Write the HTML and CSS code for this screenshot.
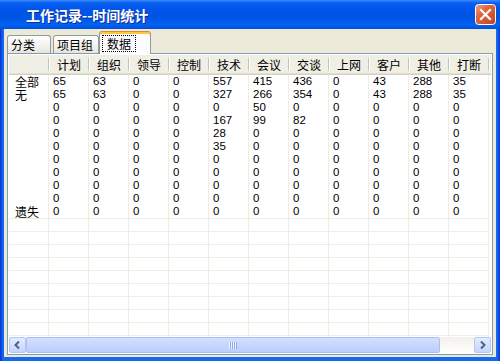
FILE: index.html
```html
<!DOCTYPE html>
<html lang="zh-CN">
<head>
    <meta charset="UTF-8">
    <title>工作记录--时间统计</title>
    <link rel="stylesheet" href="styles.css">
</head>
<body>
    <div class="window">
        <div class="titlebar">
            <span class="title">工作记录--时间统计</span>
            <span class="close">
                <svg width="21" height="21" viewBox="0 0 21 21">
                    <defs>
                        <linearGradient id="closeBg" x1="0" y1="0" x2="1" y2="1">
                            <stop offset="0" stop-color="#F0A48A"/>
                            <stop offset="0.35" stop-color="#E2683F"/>
                            <stop offset="1" stop-color="#C2401A"/>
                        </linearGradient>
                    </defs>
                    <rect x="0.5" y="0.5" width="20" height="20" rx="3" fill="url(#closeBg)" stroke="#FFFFFF"/>
                    <path d="M6 6 L15 15 M15 6 L6 15" stroke="#FFFFFF" stroke-width="2.2" stroke-linecap="square"/>
                </svg>
            </span>
        </div>
        <div class="client">
            <div class="tabs">
                <div class="tab tab-a">分类</div>
                <div class="tab tab-b">项目组</div>
                <div class="tab active"><span class="focus">数据</span></div>
            </div>
            <div class="panel">
                <div class="list-head">
                    <div class="hcell"></div>
                    <div class="hcell">计划</div>
                    <div class="hcell">组织</div>
                    <div class="hcell">领导</div>
                    <div class="hcell">控制</div>
                    <div class="hcell">技术</div>
                    <div class="hcell">会议</div>
                    <div class="hcell">交谈</div>
                    <div class="hcell">上网</div>
                    <div class="hcell">客户</div>
                    <div class="hcell">其他</div>
                    <div class="hcell">打断</div>
                </div>
                <div class="rows">
                    <div class="row"><div class="cell first">全部</div><div class="cell">65</div><div class="cell">63</div><div class="cell">0</div><div class="cell">0</div><div class="cell">557</div><div class="cell">415</div><div class="cell">436</div><div class="cell">0</div><div class="cell">43</div><div class="cell">288</div><div class="cell">35</div></div>
                    <div class="row"><div class="cell first">无</div><div class="cell">65</div><div class="cell">63</div><div class="cell">0</div><div class="cell">0</div><div class="cell">327</div><div class="cell">266</div><div class="cell">354</div><div class="cell">0</div><div class="cell">43</div><div class="cell">288</div><div class="cell">35</div></div>
                    <div class="row"><div class="cell first"></div><div class="cell">0</div><div class="cell">0</div><div class="cell">0</div><div class="cell">0</div><div class="cell">0</div><div class="cell">50</div><div class="cell">0</div><div class="cell">0</div><div class="cell">0</div><div class="cell">0</div><div class="cell">0</div></div>
                    <div class="row"><div class="cell first"></div><div class="cell">0</div><div class="cell">0</div><div class="cell">0</div><div class="cell">0</div><div class="cell">167</div><div class="cell">99</div><div class="cell">82</div><div class="cell">0</div><div class="cell">0</div><div class="cell">0</div><div class="cell">0</div></div>
                    <div class="row"><div class="cell first"></div><div class="cell">0</div><div class="cell">0</div><div class="cell">0</div><div class="cell">0</div><div class="cell">28</div><div class="cell">0</div><div class="cell">0</div><div class="cell">0</div><div class="cell">0</div><div class="cell">0</div><div class="cell">0</div></div>
                    <div class="row"><div class="cell first"></div><div class="cell">0</div><div class="cell">0</div><div class="cell">0</div><div class="cell">0</div><div class="cell">35</div><div class="cell">0</div><div class="cell">0</div><div class="cell">0</div><div class="cell">0</div><div class="cell">0</div><div class="cell">0</div></div>
                    <div class="row"><div class="cell first"></div><div class="cell">0</div><div class="cell">0</div><div class="cell">0</div><div class="cell">0</div><div class="cell">0</div><div class="cell">0</div><div class="cell">0</div><div class="cell">0</div><div class="cell">0</div><div class="cell">0</div><div class="cell">0</div></div>
                    <div class="row"><div class="cell first"></div><div class="cell">0</div><div class="cell">0</div><div class="cell">0</div><div class="cell">0</div><div class="cell">0</div><div class="cell">0</div><div class="cell">0</div><div class="cell">0</div><div class="cell">0</div><div class="cell">0</div><div class="cell">0</div></div>
                    <div class="row"><div class="cell first"></div><div class="cell">0</div><div class="cell">0</div><div class="cell">0</div><div class="cell">0</div><div class="cell">0</div><div class="cell">0</div><div class="cell">0</div><div class="cell">0</div><div class="cell">0</div><div class="cell">0</div><div class="cell">0</div></div>
                    <div class="row"><div class="cell first"></div><div class="cell">0</div><div class="cell">0</div><div class="cell">0</div><div class="cell">0</div><div class="cell">0</div><div class="cell">0</div><div class="cell">0</div><div class="cell">0</div><div class="cell">0</div><div class="cell">0</div><div class="cell">0</div></div>
                    <div class="row"><div class="cell first">遗失</div><div class="cell">0</div><div class="cell">0</div><div class="cell">0</div><div class="cell">0</div><div class="cell">0</div><div class="cell">0</div><div class="cell">0</div><div class="cell">0</div><div class="cell">0</div><div class="cell">0</div><div class="cell">0</div></div>
                </div>
                <div class="filler"></div>
                <div class="hscroll">
                    <div class="sbtn">
                        <svg width="7" height="8" viewBox="0 0 7 8"><path d="M5 0.5 L1.5 4 L5 7.5" fill="none" stroke="#4D6185" stroke-width="2"/></svg>
                    </div>
                    <div class="thumb"><span class="grip"></span></div>
                    <div class="track"></div>
                    <div class="sbtn">
                        <svg width="7" height="8" viewBox="0 0 7 8"><path d="M2 0.5 L5.5 4 L2 7.5" fill="none" stroke="#4D6185" stroke-width="2"/></svg>
                    </div>
                </div>
            </div>
        </div>
    </div>
</body>
</html>
```

FILE: styles.css
```css
html, body {
    margin: 0;
}
body {
    font-family: "Noto Sans CJK SC", sans-serif;
    font-size: 12px;
    color: #000;
    width: 500px;
    height: 361px;
    overflow: hidden;
}
.window {
    width: 500px;
    height: 361px;
    display: flex;
    flex-direction: column;
    background: linear-gradient(to right, #0831D9 0, #166AEE 3px, #166AEE 497px, #0831D9 500px);
}
.titlebar {
    height: 29px;
    flex: none;
    display: flex;
    align-items: center;
    justify-content: space-between;
    padding: 0 4px 0 26px;
    background: linear-gradient(to bottom, #3A8CFF 0%, #0A5FF2 10%, #0055EA 30%, #0054E3 60%, #0062F5 85%, #004FDB 100%);
}
.title {
    color: #fff;
    font-weight: bold;
    font-size: 14px;
    text-shadow: 1px 1px 0 #0F2C96;
    line-height: 29px;
    padding-top: 1px;
}
.close svg {
    display: block;
}
.client {
    flex: 1;
    margin: 0 4px 4px;
    padding: 0 3px 2px;
    background: #ECE9D8;
    display: flex;
    flex-direction: column;
}
.tabs {
    height: 24px;
    flex: none;
    display: flex;
    align-items: flex-end;
}
.tab {
    box-sizing: border-box;
    height: 18px;
    line-height: 17px;
    border: 1px solid #919B9C;
    border-bottom: none;
    border-radius: 3px 3px 0 0;
    background: linear-gradient(to bottom, #FFFFFF, #F0EFEA 70%, #E6E4DA);
    padding-left: 3px;
}
.tab-a {
    width: 44px;
    margin-right: 2px;
}
.tab-b {
    width: 46px;
}
.tab.active {
    width: 52px;
    height: 23px;
    margin-bottom: -1px;
    padding-left: 3px;
    padding-top: 3px;
    border-top: 1px solid #E68B2C;
    box-shadow: inset 0 2px 0 #FFC73C;
    background: #FCFCFE;
    position: relative;
    z-index: 1;
}
.focus {
    display: inline-block;
    outline: 1px dotted #000;
    padding: 0 4px;
    line-height: 15px;
}
.panel {
    flex: 1;
    border: 1px solid #7F9DB9;
    background: #fff;
    padding: 1px;
    display: flex;
    flex-direction: column;
}
.list-head {
    height: 20px;
    flex: none;
    display: flex;
    background: #F0EFE6;
    box-shadow: inset 0 -1px 0 #D6D2C2, inset 0 -2px 0 #E2DECD;
}
.hcell {
    width: 40px;
    flex: none;
    box-sizing: border-box;
    padding-left: 8px;
    line-height: 20px;
    position: relative;
}
.hcell::after {
    content: "";
    position: absolute;
    right: 0;
    top: 3px;
    bottom: 4px;
    width: 1px;
    background: #C7C5B2;
    box-shadow: 1px 0 0 #fff;
}
.row {
    display: flex;
    height: 13px;
    line-height: 13px;
}
.cell {
    width: 40px;
    flex: none;
    box-sizing: border-box;
    border-right: 1px solid #EFEDE3;
    padding-left: 4px;
    font-family: "Liberation Sans", sans-serif;
    font-size: 11.5px;
}
.cell.first {
    padding-left: 6px;
    font-family: "Noto Sans CJK SC", sans-serif;
    font-size: 12px;
}
.filler {
    flex: 1;
    background:
        repeating-linear-gradient(to right, transparent 0 39px, #EFEDE3 39px 40px),
        repeating-linear-gradient(to bottom, #EFEDE3 0 1px, transparent 1px 13px);
    background-size: 480px 100%, 480px 100%;
    background-repeat: no-repeat;
}
.hscroll {
    height: 16px;
    flex: none;
    display: flex;
}
.sbtn {
    width: 17px;
    flex: none;
    box-sizing: border-box;
    border: 1px solid #B4C8F6;
    border-radius: 2px;
    background: linear-gradient(to bottom, #E3EBFE, #C4D4FC);
    display: flex;
    align-items: center;
    justify-content: center;
}
.thumb {
    width: 414px;
    flex: none;
    box-sizing: border-box;
    border: 1px solid #A9BEF3;
    border-radius: 2px;
    background: linear-gradient(to bottom, #D3DFFD, #BBCEFA);
    display: flex;
    align-items: center;
    justify-content: center;
}
.grip {
    width: 8px;
    height: 7px;
    background: repeating-linear-gradient(to right, #EEF4FE 0 1px, #8CA9EE 1px 2px);
}
.track {
    flex: 1;
    background: linear-gradient(to bottom, #F3F1EC, #FEFEFB);
}
```
